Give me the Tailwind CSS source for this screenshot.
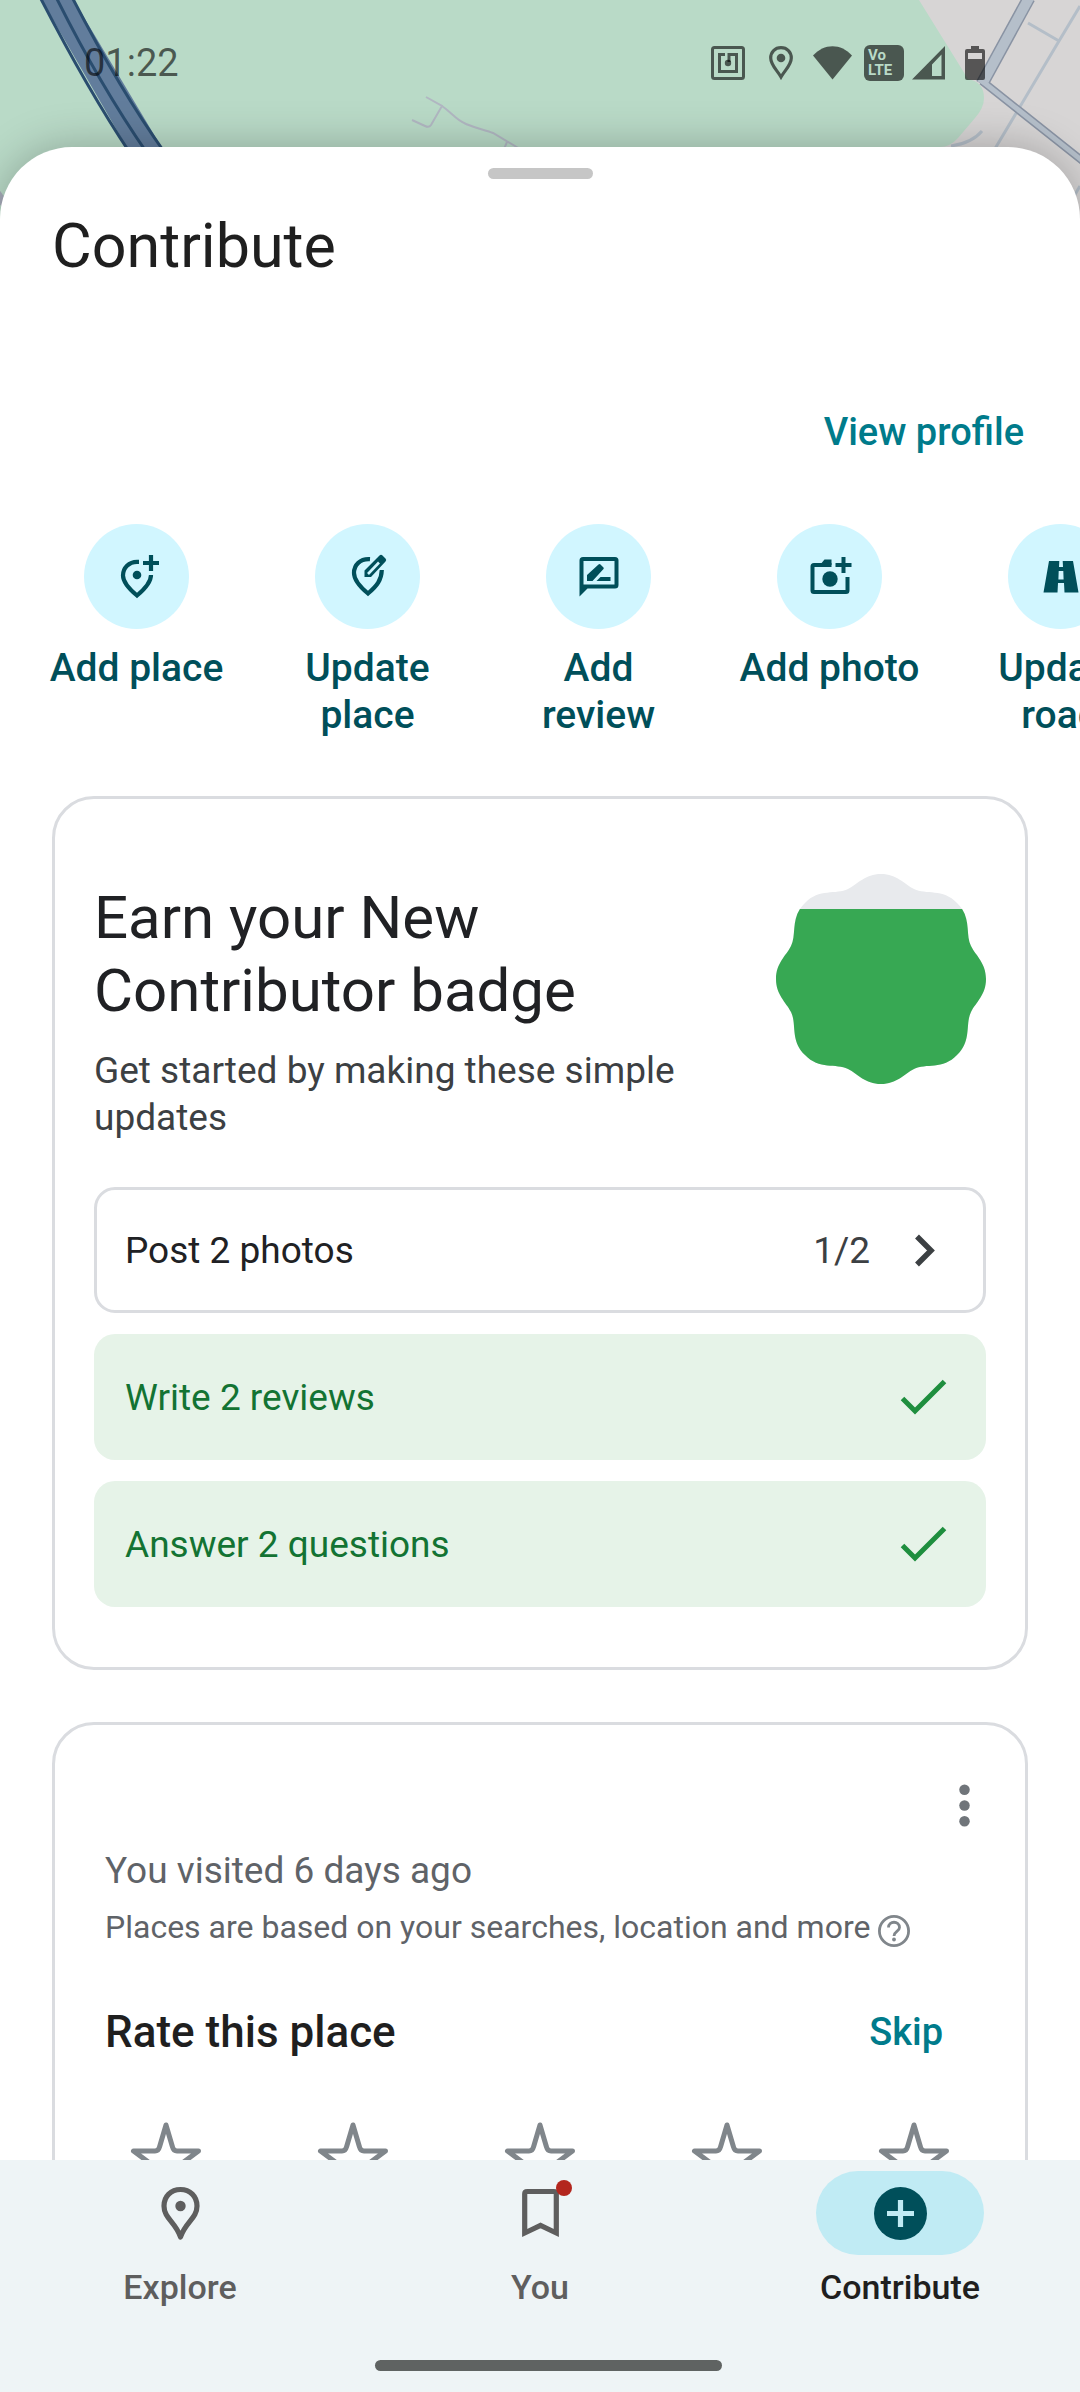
<!DOCTYPE html>
<html lang="en">
<head>
    <meta charset="UTF-8">
    <meta name="viewport" content="width=device-width, initial-scale=1.0">
    <title>Contribute</title>
    <script src="https://cdn.jsdelivr.net/npm/@tailwindcss/browser@4"></script>
</head>
<body class="bg-white font-['Roboto',sans-serif] text-[#1f1f1f]">
    <div class="relative h-screen flex flex-col overflow-hidden">

        <!-- Map behind the sheet -->
        <svg class="absolute inset-x-0 top-0 w-full" viewBox="0 0 1080 240" fill="none" aria-hidden="true">
            <rect width="1080" height="240" fill="#b9dac7"/>
            <path d="M919 0L968 79Q984 82 984 98Q984 108 975 118L958 138Q950 147 940 147L930 240H1080V0Z" fill="#d7d5d5"/>
            <path d="M1080 6L1059 41L996 147L980 175M1028 23L1059 41M951 146Q972 143 982 131M1080 186L1070 203" stroke="#b4bec8" stroke-width="3"/>
            <path d="M1029 -2L982 84" stroke="#8993a3" stroke-width="13"/>
            <path d="M982 81L1021 112L1084 162" stroke="#8993a3" stroke-width="8"/>
            <path d="M1029 -2L982 84" stroke="#b5bfca" stroke-width="10"/>
            <path d="M982 81L1021 112L1084 162" stroke="#b5bfca" stroke-width="5"/>
            <path d="M426 97L442 106L431 125Q429 128 425 126L412 120M442 106C452 113 456 120 466 124C478 129 486 130 493 133L520 149M507 142L504 149" stroke="#b1b7c2" stroke-width="2"/>
            <path d="M41 -1L73 -1L165 153L130 153Z" fill="#627d9c"/>
            <path d="M41 -1Q88 90 130 153M57 -1Q100 85 147 153M73 -1Q120 90 165 153" stroke="#2a4d6f" stroke-width="3"/>
            <path d="M-4 192L6 206" stroke="#a7acba" stroke-width="8"/>
        </svg>

        <!-- Status bar -->
        <header class="relative h-[147px] shrink-0 flex items-start justify-between pt-[42px] pl-[84px] pr-[95px] text-black/60">
            <time class="text-[38px] leading-[42px]">01:22</time>
            <div class="flex items-center h-[42px]">
                <svg class="w-[34px] h-[34px] mr-6" viewBox="0 0 34 34" fill="none" stroke="currentColor" stroke-width="3">
                    <rect x="1.500" y="1.500" width="31" height="31" rx="2"/>
                    <path d="M14 8.500H8.500V25.500H25.500V8.500H18V16"/>
                    <circle cx="17" cy="17" r="3.200" fill="currentColor" stroke="none"/>
                </svg>
                <svg class="w-6 h-[34px] mr-5" viewBox="0 0 24 34" fill="none">
                    <path d="M12 1.700C6 1.700 1.700 6 1.700 12C1.700 19 8 24 12 31C16 24 22.300 19 22.300 12C22.300 6 18 1.700 12 1.700Z" stroke="currentColor" stroke-width="3.200"/>
                    <circle cx="12" cy="12" r="4.300" fill="currentColor"/>
                </svg>
                <svg class="w-[39px] h-[34px] mr-3" viewBox="0 0 39 34" fill="currentColor">
                    <path d="M0 9.500C11 -3 28 -3 39 9.500L19.500 33.500Z"/>
                </svg>
                <div class="w-10 h-9 mr-2 rounded-md bg-black/60 text-[#b9dac7] text-[15px] leading-[15px] font-bold pl-1 pt-[3px]">Vo<br>LTE</div>
                <svg class="w-[33px] h-[34px] mr-5" viewBox="0 0 33 34" fill="currentColor">
                    <path fill-rule="evenodd" d="M33 0V33.500H0ZM29.500 8.500L20 18.500V30H29.500Z"/>
                </svg>
                <svg class="w-5 h-[34px]" viewBox="0 0 20 34" fill="currentColor">
                    <path fill-rule="evenodd" d="M6 0H14V3H18Q20 3 20 5V32Q20 34 18 34H2Q0 34 0 32V5Q0 3 2 3H6ZM3 7V13H17V7Z"/>
                </svg>
            </div>
        </header>

        <!-- Sheet -->
        <main class="relative flex-1 min-h-0">
            <section class="flex flex-col bg-white rounded-t-[72px] h-full shadow-[0_0_44px_rgba(0,0,0,0.25)]">
                <div class="mx-auto mt-[21px] w-[105px] h-[11px] shrink-0 rounded-full bg-[#c6c6c6]"></div>
                <h1 class="mt-[31px] mx-[52px] text-[61px] leading-[72px]">Contribute</h1>

                <div class="mt-32 mr-14 text-right text-[38px] leading-[44px] font-medium">
                    <a href="#profile" class="text-[#007b8b]">View profile</a>
                </div>

                <div class="mt-[70px] pl-[42px] flex shrink-0 gap-[42px] overflow-hidden text-[39px] leading-[47px] font-medium text-[#004f5a]">
                    <button class="w-[189px] shrink-0 flex flex-col items-center">
                        <span class="size-[105px] rounded-full bg-[#d1f6ff] flex items-center justify-center">
                            <svg class="size-12" viewBox="0 0 48 48" fill="none" stroke="currentColor" stroke-width="4.200">
                                <path d="M26 8.800H24C16 8.800 10 15 10 22.500C10 29 15 35 24 42.500C33 35 38 29 38 22"/>
                                <path d="M38 2V18M30 10H46"/>
                                <circle cx="24" cy="22" r="4.300" fill="currentColor" stroke="none"/>
                            </svg>
                        </span>
                        <span class="mt-4">Add place</span>
                    </button>
                    <button class="w-[189px] shrink-0 flex flex-col items-center">
                        <span class="size-[105px] rounded-full bg-[#d1f6ff] flex items-center justify-center">
                            <svg class="size-12" viewBox="0 0 48 48" fill="none">
                                <path d="M26 6.200C16 5.500 10 12 10 20C10 27 15 33 24 40.500C33 33 37.500 27 37.800 17" stroke="currentColor" stroke-width="4.200"/>
                                <path d="M20.500 24V17.500L35.500 2.500Q37 1 38.500 2.500L41.500 5.500Q43 7 41.500 8.500L27 24Z" fill="currentColor"/>
                                <path d="M24 21L35 9.500" stroke="#d1f6ff" stroke-width="2.600"/>
                            </svg>
                        </span>
                        <span class="mt-4">Update place</span>
                    </button>
                    <button class="w-[189px] shrink-0 flex flex-col items-center">
                        <span class="size-[105px] rounded-full bg-[#d1f6ff] flex items-center justify-center">
                            <svg class="size-12" viewBox="0 0 48 48" fill="currentColor">
                                <path fill-rule="evenodd" d="M8 4H40Q43.500 4 43.500 7.500V32Q43.500 35.500 40 35.500H12.500L4.500 43.500V7.500Q4.500 4 8 4ZM8.500 8V31.500H39.500V8Z"/>
                                <path d="M12 28V22L23.500 11.500Q24.500 10.500 25.500 11.500L28.500 14.500Q29 15.500 28.500 16L17.500 28ZM21.500 28L25.500 24H35.500V28Z"/>
                            </svg>
                        </span>
                        <span class="mt-4">Add<br>review</span>
                    </button>
                    <button class="w-[189px] shrink-0 flex flex-col items-center">
                        <span class="size-[105px] rounded-full bg-[#d1f6ff] flex items-center justify-center">
                            <svg class="size-12" viewBox="0 0 48 48" fill="none" stroke="currentColor" stroke-width="4">
                                <path d="M25.500 12H8Q6.500 12 6.500 13.500V37.500Q6.500 39 8 39H40Q41.500 39 41.500 37.500V24"/>
                                <path d="M14 12L18.500 6.500H25.500V12Z" fill="currentColor" stroke="none"/>
                                <path d="M37.500 4V20M29.500 12H45.500"/>
                                <circle cx="24" cy="26" r="7.700" fill="currentColor" stroke="none"/>
                            </svg>
                        </span>
                        <span class="mt-4">Add photo</span>
                    </button>
                    <button class="w-[189px] shrink-0 flex flex-col items-center">
                        <span class="size-[105px] rounded-full bg-[#d1f6ff] flex items-center justify-center">
                            <svg class="size-12" viewBox="0 0 48 48" fill="currentColor">
                                <path fill-rule="evenodd" d="M12 8H36L41.500 39.500H6.500ZM22.300 8L22 14H26L25.700 8ZM21.700 18L21.400 26.500H26.600L26.300 18ZM21 30L20.500 39.500H27.500L27 30Z"/>
                            </svg>
                        </span>
                        <span class="mt-4">Update<br>road</span>
                    </button>
                </div>

                <!-- Badge progress -->
                <article class="mt-[57px] mx-[52px] shrink-0 border-[3px] border-[#dadce0] rounded-[42px] px-[39px] pt-[75px] pb-[60px]">
                    <div class="flex items-start justify-between">
                        <div class="flex-1 pt-[7px]">
                            <h2 class="text-[60px] leading-[73px] text-[#202124]">Earn your New<br>Contributor badge</h2>
                            <p class="mt-5 text-[37px] leading-[47px] text-[#3c4043]">Get started by making these simple updates</p>
                        </div>
                        <svg class="ml-14 size-[210px] shrink-0" viewBox="-105 -105 210 210" role="img" aria-label="Badge progress">
                            <defs>
                                <clipPath id="progress"><rect x="-105" y="-70" width="210" height="175"/></clipPath>
                                <path id="badge" d="M0 -105C16 -105 23 -95 33 -90C45 -84 62 -91 76 -76C91 -62 84 -45 90 -33C95 -23 105 -16 105 0C105 16 95 23 90 33C84 45 91 62 76 76C62 91 45 84 33 90C23 95 16 105 0 105C-16 105 -23 95 -33 90C-45 84 -62 91 -76 76C-91 62 -84 45 -90 33C-95 23 -105 16 -105 0C-105 -16 -95 -23 -90 -33C-84 -45 -91 -62 -76 -76C-62 -91 -45 -84 -33 -90C-23 -95 -16 -105 0 -105Z"/>
                            </defs>
                            <use href="#badge" fill="#e8eaed"/>
                            <use href="#badge" fill="#37a853" clip-path="url(#progress)"/>
                        </svg>
                    </div>

                    <div class="mt-[46px] flex flex-col gap-[21px] text-[37px] leading-[47px]">
                        <button class="h-[126px] flex items-center border-[3px] border-[#dadce0] rounded-[21px] pl-7 pr-7 text-[#202124]">
                            <span class="flex-1 text-left">Post 2 photos</span>
                            <span class="mr-[22px] text-[#3c4043]">1/2</span>
                            <svg class="size-[63px]" viewBox="0 0 63 63" fill="none" stroke="#3c4043" stroke-width="5.500">
                                <path d="M25 17.500L39 31.500L25 45.500"/>
                            </svg>
                        </button>
                        <button class="h-[126px] flex items-center rounded-[21px] px-[31px] bg-[#e6f3e8] text-[#137333]">
                            <span class="flex-1 text-left">Write 2 reviews</span>
                            <svg class="size-[63px]" viewBox="0 0 63 63" fill="none" stroke="#1e8e3e" stroke-width="5">
                                <path d="M10.500 32.500L23 45L52.500 15.500"/>
                            </svg>
                        </button>
                        <button class="h-[126px] flex items-center rounded-[21px] px-[31px] bg-[#e6f3e8] text-[#137333]">
                            <span class="flex-1 text-left">Answer 2 questions</span>
                            <svg class="size-[63px]" viewBox="0 0 63 63" fill="none" stroke="#1e8e3e" stroke-width="5">
                                <path d="M10.500 32.500L23 45L52.500 15.500"/>
                            </svg>
                        </button>
                    </div>
                </article>

                <!-- Visited place -->
                <article class="mt-[52px] mx-[52px] shrink-0 border-[3px] border-[#dadce0] rounded-[42px] px-[50px] pt-[49px] pb-16">
                    <div class="-mr-[21px] flex justify-end">
                        <button aria-label="More options">
                            <svg class="size-[63px]" viewBox="0 0 24 24" fill="#70757a">
                                <circle cx="12" cy="6" r="2"/>
                                <circle cx="12" cy="12" r="2"/>
                                <circle cx="12" cy="18" r="2"/>
                            </svg>
                        </button>
                    </div>
                    <p class="mt-[9px] text-[37px] leading-[50px] text-[#5f6368]">You visited 6 days ago</p>
                    <p class="mt-[6px] flex items-center gap-2 text-[32px] leading-[50px] text-[#5f6368]">
                        Places are based on your searches, location and more
                        <button aria-label="Help" class="mt-2">
                            <svg class="size-8" viewBox="0 0 32 32" fill="none" stroke="#80868b" stroke-width="2.800">
                                <circle cx="16" cy="16" r="14.600"/>
                                <path d="M10.500 12.500C10.500 5.500 21.500 5.500 21.500 12.500C21.500 16.500 16 16.500 16 21"/>
                                <circle cx="16" cy="24.500" r="1.900" fill="#80868b" stroke="none"/>
                            </svg>
                        </button>
                    </p>
                    <div class="mt-[50px] mr-[32px] flex items-center justify-between font-medium">
                        <h3 class="text-[44px] leading-[60px]">Rate this place</h3>
                        <button class="text-[38px] leading-[56px] text-[#007b8b]">Skip</button>
                    </div>
                    <div class="mt-[58px] mx-6 flex justify-between" role="group" aria-label="Rating">
                        <button aria-label="1 star"><svg class="size-[74px]" viewBox="0 0 74 74" fill="none" stroke="#80868b" stroke-width="5" stroke-linejoin="round"><path d="M37 5L43.500 27Q44.500 31 48 31H69.500L52 44Q49 46.500 50 50L57 71L37 56L17 71L24 50Q25 46.500 22 44L4.500 31H26Q29.500 31 30.500 27Z"/></svg></button>
                        <button aria-label="2 stars"><svg class="size-[74px]" viewBox="0 0 74 74" fill="none" stroke="#80868b" stroke-width="5" stroke-linejoin="round"><path d="M37 5L43.500 27Q44.500 31 48 31H69.500L52 44Q49 46.500 50 50L57 71L37 56L17 71L24 50Q25 46.500 22 44L4.500 31H26Q29.500 31 30.500 27Z"/></svg></button>
                        <button aria-label="3 stars"><svg class="size-[74px]" viewBox="0 0 74 74" fill="none" stroke="#80868b" stroke-width="5" stroke-linejoin="round"><path d="M37 5L43.500 27Q44.500 31 48 31H69.500L52 44Q49 46.500 50 50L57 71L37 56L17 71L24 50Q25 46.500 22 44L4.500 31H26Q29.500 31 30.500 27Z"/></svg></button>
                        <button aria-label="4 stars"><svg class="size-[74px]" viewBox="0 0 74 74" fill="none" stroke="#80868b" stroke-width="5" stroke-linejoin="round"><path d="M37 5L43.500 27Q44.500 31 48 31H69.500L52 44Q49 46.500 50 50L57 71L37 56L17 71L24 50Q25 46.500 22 44L4.500 31H26Q29.500 31 30.500 27Z"/></svg></button>
                        <button aria-label="5 stars"><svg class="size-[74px]" viewBox="0 0 74 74" fill="none" stroke="#80868b" stroke-width="5" stroke-linejoin="round"><path d="M37 5L43.500 27Q44.500 31 48 31H69.500L52 44Q49 46.500 50 50L57 71L37 56L17 71L24 50Q25 46.500 22 44L4.500 31H26Q29.500 31 30.500 27Z"/></svg></button>
                    </div>
                </article>
            </section>
        </main>

        <!-- Bottom navigation -->
        <nav class="relative shrink-0 bg-[#eef4f6] pt-[11px] pb-[21px]">
            <div class="grid grid-cols-3 text-[34px] leading-[42px] font-medium text-[#5e5e5e]">
                <a href="#explore" class="flex flex-col items-center gap-[11px]">
                    <span class="w-[168px] h-[84px] flex items-center justify-center">
                        <svg class="size-[63px]" viewBox="0 0 63 63" fill="none" stroke-linejoin="round">
                            <path d="M31.500 7.500C22 7.500 15 14.500 15 24C15 36.500 26.500 40 31.500 55C36.500 40 48 36.500 48 24C48 14.500 41 7.500 31.500 7.500Z" stroke="currentColor" stroke-width="5.200"/>
                            <circle cx="31.500" cy="24" r="5.200" fill="currentColor"/>
                        </svg>
                    </span>
                    Explore
                </a>
                <a href="#you" class="flex flex-col items-center gap-[11px]">
                    <span class="relative w-[168px] h-[84px] flex items-center justify-center">
                        <svg class="size-[63px]" viewBox="0 0 63 63" fill="none">
                            <path d="M15.700 51V12Q15.700 9.500 18.200 9.500H44.800Q47.300 9.500 47.300 12V51L31.500 43.500Z" stroke="currentColor" stroke-width="5.200"/>
                        </svg>
                        <span class="absolute top-[9px] right-[52px] size-4 rounded-full bg-[#b3261e]"></span>
                    </span>
                    You
                </a>
                <a href="#contribute" aria-current="page" class="flex flex-col items-center gap-[11px] text-[#1f1f1f]">
                    <span class="w-[168px] h-[84px] flex items-center justify-center rounded-full bg-[#c0ebf4]">
                        <svg class="size-[53px]" viewBox="0 0 53 53" fill="none">
                            <circle cx="26.500" cy="26.500" r="26.500" fill="#004f5a"/>
                            <path d="M26.500 13V40M13 26.500H40" stroke="#c0ebf4" stroke-width="5.200"/>
                        </svg>
                    </span>
                    Contribute
                </a>
            </div>
            <div class="flex justify-center mt-[52px] pl-4">
                <div class="w-[347px] h-[11px] rounded-full bg-[#5f6362]"></div>
            </div>
        </nav>
    </div>
</body>
</html>
